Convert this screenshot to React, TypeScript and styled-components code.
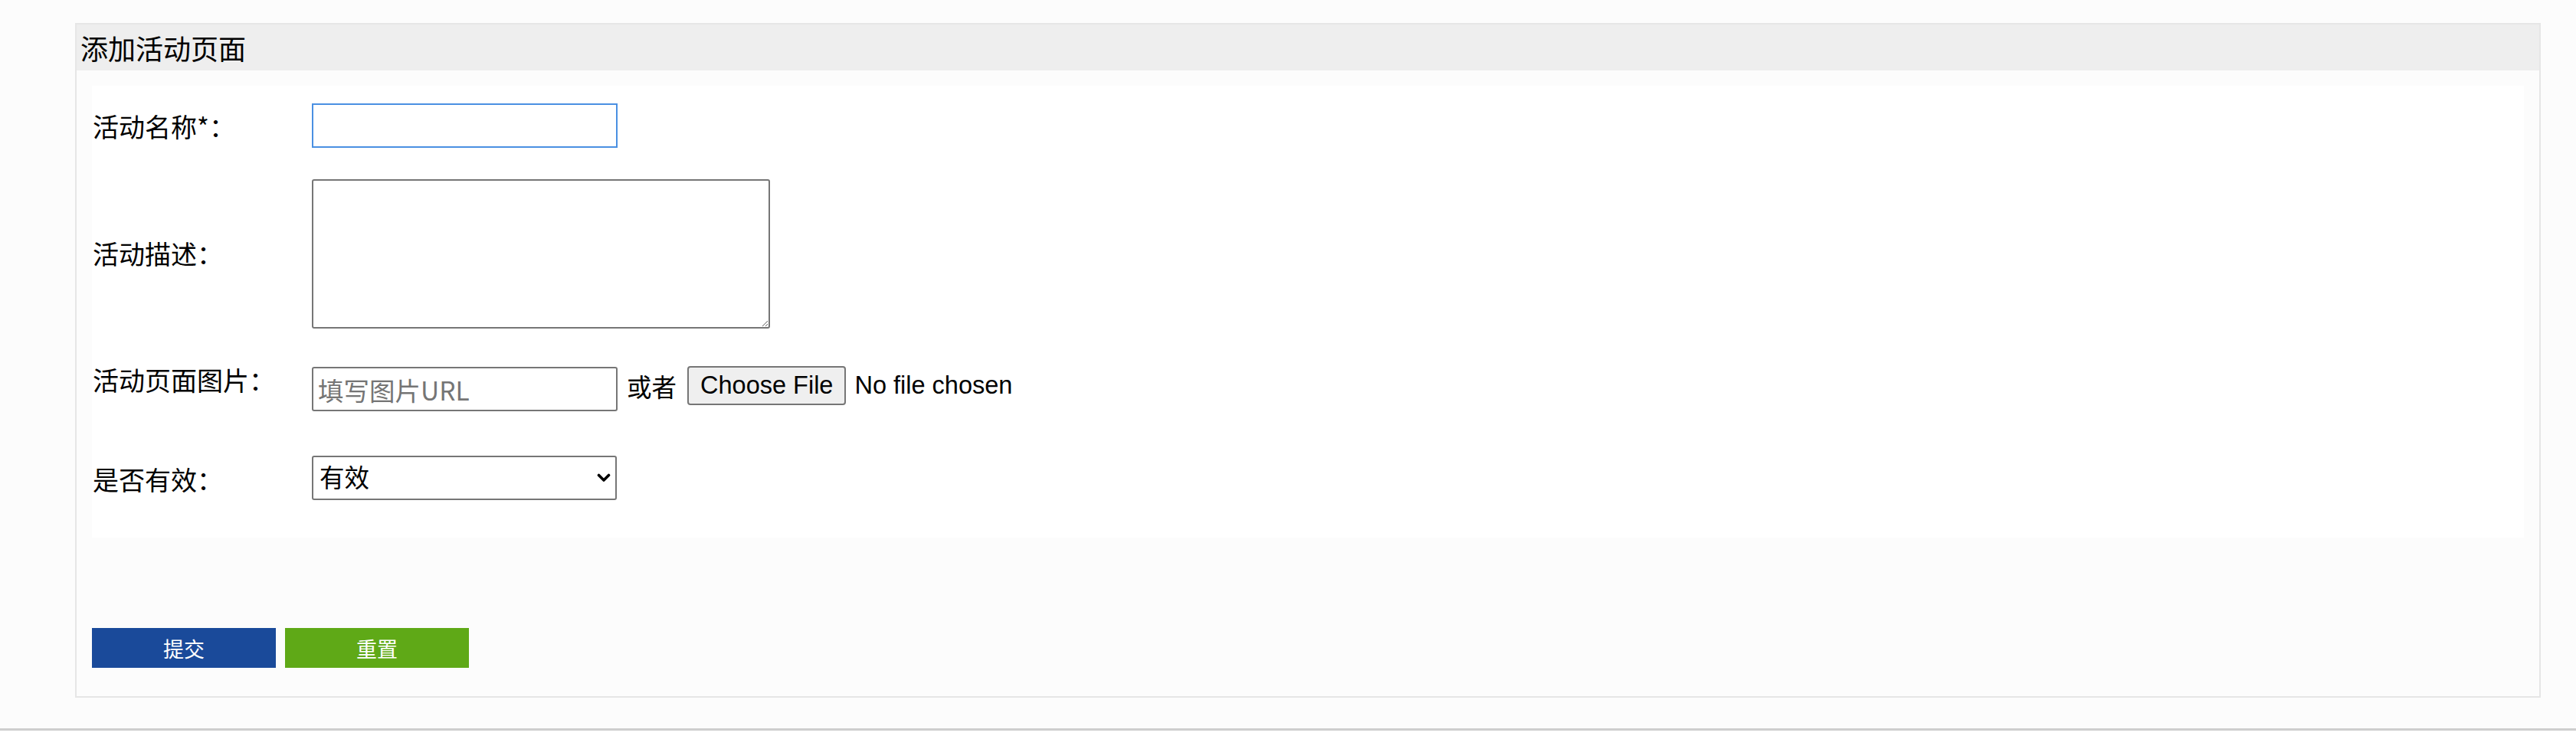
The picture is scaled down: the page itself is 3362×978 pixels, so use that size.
import React from "react";
import styled, { createGlobalStyle } from "styled-components";

const GlobalStyle = createGlobalStyle`
  html, body {
    margin: 0;
    padding: 0;
    background: #ffffff;
  }
  body {
    font-family: "Liberation Sans", "Noto Sans CJK SC", sans-serif;
    color: #000;
  }
  * { box-sizing: border-box; }
`;

const CJK = `"Noto Sans CJK SC", "Liberation Sans", sans-serif`;

const Page = styled.div`
  background: #fcfcfc;
  padding: 30px 46px 40px 98px;
  border-bottom: 3px solid #cecece;
`;

const Panel = styled.section`
  border: 2px solid #e6e6e6;
  background: #fcfcfc;
`;

const PanelHeader = styled.h2`
  margin: 0;
  height: 60px;
  padding-left: 5px;
  background: #eeeeee;
  font-family: ${CJK};
  font-size: 36px;
  font-weight: 400;
  line-height: 60px;
  color: #000;
`;

const PanelBody = styled.div`
  padding: 20px 20px 37px 20px;
`;

const FormArea = styled.div`
  background: #ffffff;
  display: flex;
  flex-direction: column;
  padding: 0 0 49px 1px;
`;

const Row = styled.div<{ $gap: number }>`
  display: flex;
  align-items: center;
  margin-top: ${(p) => p.$gap}px;
`;

const Label = styled.label<{ $shift: number }>`
  flex: none;
  width: 286px;
  font-family: ${CJK};
  font-size: 34px;
  line-height: 34px;
  color: #000;
  margin-top: ${(p) => (p.$shift > 0 ? p.$shift * 2 : 0)}px;
  margin-bottom: ${(p) => (p.$shift < 0 ? -p.$shift * 2 : 0)}px;
`;

const TextInput = styled.input<{ $focused?: boolean }>`
  width: 399px;
  height: 58px;
  border: 2px solid ${(p) => (p.$focused ? "#4a90e2" : "#767676")};
  border-radius: ${(p) => (p.$focused ? 0 : 3)}px;
  background: #fff;
  padding: 0 6px;
  font-family: ${CJK};
  font-size: 33.5px;
  color: #000;
  outline: none;
  &::placeholder {
    color: #757575;
  }
`;

const TextArea = styled.textarea`
  width: 598px;
  height: 195px;
  border: 2px solid #767676;
  border-radius: 3px;
  background: #fff;
  font-family: "Liberation Mono", monospace;
  font-size: 28px;
  padding: 4px;
  outline: none;
`;

const Controls = styled.div`
  display: flex;
  align-items: flex-start;
`;

const FileGroup = styled.div`
  display: flex;
  align-items: center;
  height: 51px;
  margin-top: -1px;
  margin-left: 12px;
`;

const OrText = styled.span`
  font-family: ${CJK};
  font-size: 32.5px;
  margin-right: 14px;
`;

const FileButton = styled.button`
  height: 51px;
  padding: 0 15px;
  border: 2px solid #767676;
  border-radius: 4px;
  background: #efefef;
  font-family: "Liberation Sans", sans-serif;
  font-size: 32.5px;
  color: #000;
  margin-right: 11px;
`;

const FileStatus = styled.span`
  font-family: "Liberation Sans", sans-serif;
  font-size: 32.5px;
  color: #000;
`;

const SelectWrap = styled.div`
  position: relative;
  width: 398px;
  height: 58px;
`;

const Select = styled.select`
  appearance: none;
  -webkit-appearance: none;
  width: 100%;
  height: 100%;
  border: 2px solid #767676;
  border-radius: 3px;
  background: #fff;
  padding: 0 40px 6px 8px;
  font-family: ${CJK};
  font-size: 32.5px;
  color: #000;
  outline: none;
`;

const Chevron = styled.svg`
  position: absolute;
  right: 8px;
  top: 50%;
  width: 18px;
  height: 12px;
  margin-top: -6px;
  pointer-events: none;
`;

const Actions = styled.div`
  display: flex;
  gap: 12px;
  margin-top: 118px;
`;

const ActionButton = styled.button<{ $variant: "primary" | "success" }>`
  width: 240px;
  height: 52px;
  border: none;
  border-radius: 0;
  padding: 0;
  background: ${(p) => (p.$variant === "primary" ? "#1a4a9a" : "#5fa917")};
  color: #fff;
  font-family: ${CJK};
  font-size: 27px;
  cursor: pointer;
`;

export default function App() {
  return (
    <>
      <GlobalStyle />
      <Page>
        <Panel>
          <PanelHeader>添加活动页面</PanelHeader>
          <PanelBody>
            <FormArea>
              <Row $gap={23}>
                <Label $shift={1}>活动名称*：</Label>
                <TextInput $focused type="text" />
              </Row>
              <Row $gap={41}>
                <Label $shift={-1}>活动描述：</Label>
                <TextArea />
              </Row>
              <Row $gap={50}>
                <Label $shift={-12}>活动页面图片：</Label>
                <Controls>
                  <TextInput type="text" placeholder="填写图片URL" />
                  <FileGroup>
                    <OrText>或者</OrText>
                    <FileButton type="button">Choose File</FileButton>
                    <FileStatus>No file chosen</FileStatus>
                  </FileGroup>
                </Controls>
              </Row>
              <Row $gap={58}>
                <Label $shift={2}>是否有效：</Label>
                <SelectWrap>
                  <Select defaultValue="1">
                    <option value="1">有效</option>
                    <option value="0">无效</option>
                  </Select>
                  <Chevron viewBox="0 0 18 12">
                    <path d="M2.5 2.5 L9 9 L15.5 2.5" fill="none" stroke="#000" strokeWidth="3.6" strokeLinecap="round" strokeLinejoin="round" />
                  </Chevron>
                </SelectWrap>
              </Row>
            </FormArea>
            <Actions>
              <ActionButton $variant="primary" type="submit">提交</ActionButton>
              <ActionButton $variant="success" type="reset">重置</ActionButton>
            </Actions>
          </PanelBody>
        </Panel>
      </Page>
    </>
  );
}
